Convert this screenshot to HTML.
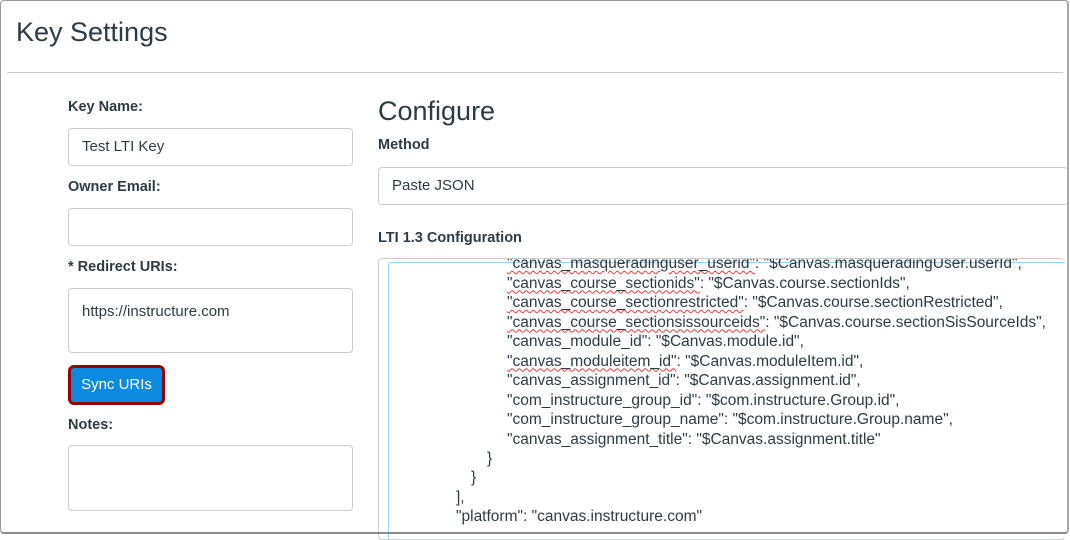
<!DOCTYPE html>
<html><head><style>
body{margin:0;width:1070px;height:535px;background:#fff;font-family:"Liberation Sans",sans-serif;color:#2d3b45;overflow:hidden;position:relative}
.win{position:absolute;left:0;top:0;width:1066px;height:531px;border:1px solid #9a9a9a;border-radius:4px;border-bottom:2px solid #8a8a8a;border-right:2px solid #aaa;z-index:5;pointer-events:none}
.abs{position:absolute}
h1{position:absolute;left:16px;top:17px;margin:0;font-weight:normal;font-size:27px;color:#2d3b45}
.hr{position:absolute;left:7px;top:72px;width:1056px;height:1px;background:#c7cdd1}
.lbl{position:absolute;font-weight:bold;font-size:14.5px;color:#2d3b45}
.inp{position:absolute;border:1px solid #c7cdd1;border-radius:4px;background:#fff;font-size:15px;box-sizing:border-box;padding-left:13px}
.btn{position:absolute;left:68px;top:365px;width:97px;height:40px;box-sizing:border-box;border:3px solid #990000;border-radius:6px;background:#0b8ae0;color:#fff;font-size:15px;text-align:center;line-height:34px}
.code{position:absolute;font-size:15.5px;color:#2d3b45;white-space:pre;line-height:19.5px}
.sq{text-decoration:underline wavy #e04040;text-decoration-thickness:1px;text-underline-offset:2px}
</style></head><body>
<div class="win"></div>
<h1>Key Settings</h1>
<div class="hr"></div>
<div class="lbl" style="left:68px;top:99px">Key Name:</div>
<div class="inp" style="left:68px;top:128px;width:285px;height:38px;line-height:36px">Test LTI Key</div>
<div class="lbl" style="left:68px;top:179px">Owner Email:</div>
<div class="inp" style="left:68px;top:208px;width:285px;height:38px"></div>
<div class="lbl" style="left:68px;top:259px">* Redirect URIs:</div>
<div class="inp" style="left:68px;top:288px;width:285px;height:65px;padding-top:14px">https://instructure.com</div>
<div class="btn">Sync URIs</div>
<div class="lbl" style="left:68px;top:417px">Notes:</div>
<div class="inp" style="left:68px;top:445px;width:285px;height:66px"></div>
<div class="abs" style="left:378px;top:96px;font-size:27px">Configure</div>
<div class="lbl" style="left:378px;top:137px">Method</div>
<div class="inp" style="left:378px;top:167px;width:690px;height:38px;line-height:36px;border-right:none">Paste JSON</div>
<div class="lbl" style="left:378px;top:230px">LTI 1.3 Configuration</div>
<div class="abs" style="left:378px;top:258px;width:686px;height:280px;border:1px solid #c7cdd1;border-radius:4px;border-right:none;overflow:hidden">
<div class="abs" style="left:9px;top:3px;width:690px;height:300px;border:1px solid #9fd0f0;border-radius:3px"></div>
<div class="code" style="left:128px;top:-5px"><span class="sq">"canvas_masqueradinguser_userid"</span>: "$Canvas.masqueradingUser.userId",
<span class="sq">"canvas_course_sectionids"</span>: "$Canvas.course.sectionIds",
<span class="sq">"canvas_course_sectionrestricted"</span>: "$Canvas.course.sectionRestricted",
<span class="sq">"canvas_course_sectionsissourceids"</span>: "$Canvas.course.sectionSisSourceIds",
"canvas_module_id": "$Canvas.module.id",
<span class="sq">"canvas_moduleitem_id"</span>: "$Canvas.moduleItem.id",
"canvas_assignment_id": "$Canvas.assignment.id",
"com_instructure_group_id": "$com.instructure.Group.id",
"com_instructure_group_name": "$com.instructure.Group.name",
"canvas_assignment_title": "$Canvas.assignment.title"</div>
<div class="code" style="left:108px;top:190px">}</div>
<div class="code" style="left:92px;top:209px">}</div>
<div class="code" style="left:77px;top:229px">],</div>
<div class="code" style="left:77px;top:248px">"platform": "canvas.instructure.com"</div>
</div>
</body></html>
